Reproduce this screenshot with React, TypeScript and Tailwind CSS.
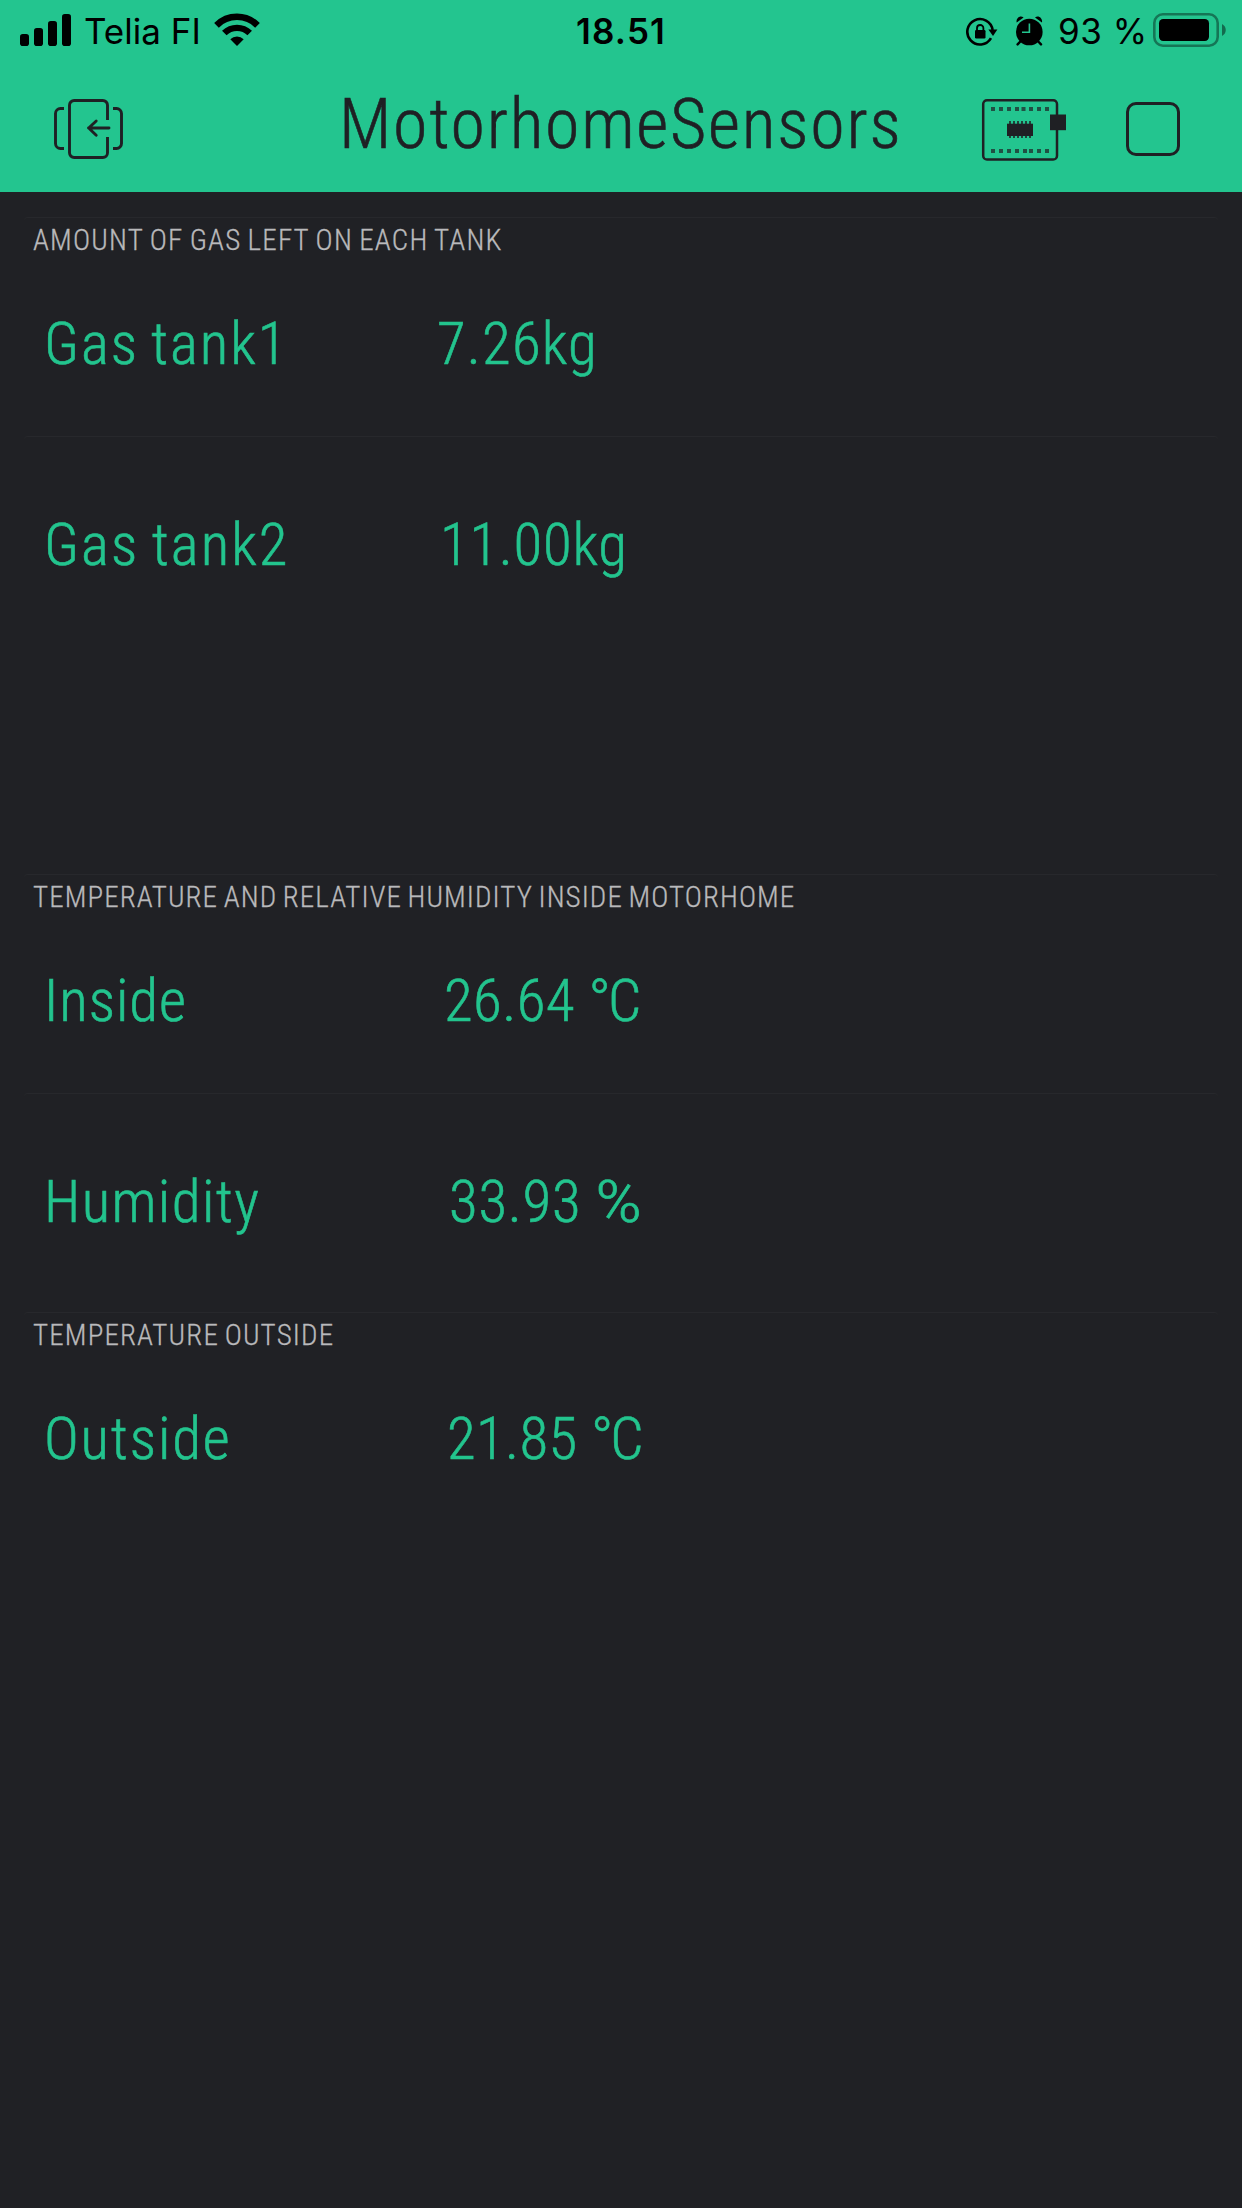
import React from "react";

type Reading = {
  label: string;
  value: string;
  unit: string;
  labelClass: string;
  valueClass: string;
  unitClass?: string;
};

function SignalIcon() {
  return (
    <svg className="ml-5 mt-3.5 h-8 w-[52px]" viewBox="20 14 52 32">
      <rect x="20" y="34" width="9" height="12" rx="2.8" />
      <rect x="34" y="28" width="9" height="18" rx="2.8" />
      <rect x="48" y="21" width="9" height="25" rx="2.8" />
      <rect x="62" y="14" width="9" height="32" rx="2.8" />
    </svg>
  );
}

function WifiIcon() {
  return (
    <svg className="mt-3 h-[34px] w-12" viewBox="213 12 48 34">
      <path d="M216.500 25.300A29 29 0 0 1 257.500 25.300" fill="none" stroke="#000" strokeWidth="6.600" />
      <path d="M224.300 33.100A18 18 0 0 1 249.700 33.100" fill="none" stroke="#000" strokeWidth="6.400" />
      <path d="M230.300 39.300A9.600 9.600 0 0 1 243.700 39.300L237 46Z" />
    </svg>
  );
}

function RotationLockIcon() {
  return (
    <svg className="h-8 w-[33px]" viewBox="965 15 33 32">
      <path d="M992.600 30A12.700 12.700 0 1 0 991 38.200" fill="none" stroke="#000" strokeWidth="2.600" />
      <path d="M988.400 29.600H997.400L993 36Z" />
      <rect x="975" y="30" width="10.500" height="8.500" rx="1.200" />
      <path d="M977 31V28.200a3.200 3.200 0 0 1 6.400 0V31" fill="none" stroke="#000" strokeWidth="1.800" />
    </svg>
  );
}

function AlarmIcon() {
  return (
    <svg className="h-8 w-[30px]" viewBox="1014 15 30 32">
      <circle cx="1029.300" cy="32" r="13.300" />
      <path d="M1016.700 22.600C1015.600 18.600 1020 14.600 1023.600 17.600ZM1041.900 22.600C1043 18.600 1038.600 14.600 1035 17.600Z" />
      <path d="M1020.800 41L1017.600 44.400M1037.800 41L1041 44.400" stroke="#000" strokeWidth="2.400" strokeLinecap="round" />
      <path d="M1029.400 23.400V32.300H1022" fill="none" stroke="#23c58f" strokeWidth="1.600" />
    </svg>
  );
}

function BatteryIcon() {
  return (
    <svg className="h-[34px] w-[75px]" viewBox="1152 13 75 34">
      <rect x="1154.300" y="14.300" width="63.400" height="31.400" rx="8.600" fill="none" stroke="#000" strokeOpacity=".4" strokeWidth="2.600" />
      <rect x="1159" y="19" width="50" height="22" rx="4.200" />
      <path d="M1222 24C1227 26.500 1227 33.500 1222 36Z" fillOpacity=".45" />
    </svg>
  );
}

function ExitIcon() {
  return (
    <svg className="h-[62px] w-[70px]" viewBox="54 98 70 62" fill="none" stroke="#1f2024" strokeWidth="2.900">
      <path d="M107.500 120V105.200a4.700 4.700 0 0 0-4.700-4.700H74.200a4.700 4.700 0 0 0-4.700 4.700V152.800a4.700 4.700 0 0 0 4.700 4.700H102.800a4.700 4.700 0 0 0 4.700-4.700V137" />
      <path d="M109 128H88.500M96.200 121L88.700 128L96.200 135.200" strokeLinecap="round" strokeLinejoin="round" />
      <path d="M64 108.500H60.500a5 5 0 0 0-5 5V143.500a5 5 0 0 0 5 5H64M113 108.500H116.500a5 5 0 0 1 5 5V143.500a5 5 0 0 1-5 5H113" />
    </svg>
  );
}

const topPads = [991, 999, 1007, 1015, 1021.5, 1029, 1037, 1045];
const bottomPads = [991, 999, 1007, 1015, 1023, 1029, 1037, 1045];
const chipPins = [1009, 1013, 1017, 1021, 1025, 1029];

function BoardIcon() {
  return (
    <svg className="h-16 w-[86px]" viewBox="981 98 86 64" fill="#1f2024">
      <rect x="983.200" y="100.200" width="73.800" height="59.300" rx="3.800" fill="none" stroke="#1f2024" strokeWidth="2.500" />
      {topPads.map((x) => (
        <rect key={x} x={x} y="107" width="4" height="4" fillOpacity=".7" />
      ))}
      {bottomPads.map((x) => (
        <rect key={x} x={x} y="149" width="4" height="4" fillOpacity=".7" />
      ))}
      {chipPins.map((x) => (
        <path key={x} d={`M${x} 121h2v3h-2zM${x} 136h2v2h-2z`} fillOpacity=".8" />
      ))}
      <rect x="1007" y="123.700" width="26" height="12.300" />
      <rect x="1050" y="114.500" width="16" height="15.700" />
    </svg>
  );
}

function ReadingRow({ label, value, unit, labelClass, valueClass, unitClass = "" }: Reading) {
  return (
    <div className="flex h-20 whitespace-nowrap pl-5 text-[59px] font-light leading-[80px] text-[#23c48e] [-webkit-text-stroke:0.6px_#23c48e]">
      <span className={`w-[393px] ${labelClass}`}>{label}</span>
      <span className={valueClass}>
        {value}
        <span className={unitClass}>{unit}</span>
      </span>
    </div>
  );
}

function Widget({ caption, captionClass, className, reading }: { caption?: string; captionClass?: string; className: string; reading: Reading }) {
  return (
    <section className={`mx-6 rounded border-t border-[#27282c] ${className}`}>
      {caption ? (
        <h2 className={`mb-12 mt-1.5 h-8 whitespace-nowrap pl-[9px] text-[29px] font-light leading-8 text-[#b9b9bb] [-webkit-text-stroke:0.3px_#b9b9bb] ${captionClass}`}>{caption}</h2>
      ) : (
        <div className="h-[68px]" />
      )}
      <ReadingRow {...reading} />
    </section>
  );
}

export default function App() {
  return (
    <div className="h-[2208px] w-[1242px] overflow-hidden bg-[#202125] font-['Roboto_Condensed',Roboto,sans-serif]">
      <header className="h-48 bg-[#23c58f] text-[#1f2024]">
        <div className="flex h-[62px] items-start font-['Inter',sans-serif] text-[35px] leading-[44px] text-black">
          <SignalIcon />
          <span className="ml-3 mt-[9px] w-[129px] whitespace-nowrap">Telia FI</span>
          <WifiIcon />
          <span className="ml-[315px] mt-[9px] w-[90px] whitespace-nowrap font-semibold tracking-[1.200px]">18.51</span>
          <div className="ml-[299px] mt-[15px]">
            <RotationLockIcon />
          </div>
          <div className="ml-4 mt-[15px]">
            <AlarmIcon />
          </div>
          <span className="ml-[14px] mt-[9px] w-[94px] whitespace-nowrap tracking-[0.500px]">93 %</span>
          <div className="mt-[13px]">
            <BatteryIcon />
          </div>
        </div>
        <div className="flex items-start pl-[54px]">
          <div className="mt-9">
            <ExitIcon />
          </div>
          <h1 className="ml-[215px] mt-[22px] w-[642px] whitespace-nowrap text-[70px] font-light leading-[80px] tracking-[1.750px] [-webkit-text-stroke:0.6px_#1f2024]">MotorhomeSensors</h1>
          <div className="mt-9">
            <BoardIcon />
          </div>
          <div className="ml-[59px] mt-10 size-[54px] rounded-[10px] border-3 border-[#1f2024]" />
        </div>
      </header>
      <main className="pt-[25px]">
        <Widget
          className="h-[219px]"
          caption="AMOUNT OF GAS LEFT ON EACH TANK"
          captionClass="tracking-[1.200px] [word-spacing:-1.500px]"
          reading={{ label: "Gas tank1", value: "7.26", unit: "kg", labelClass: "tracking-[1.900px] [word-spacing:-3px]", valueClass: "tracking-[1.150px]" }}
        />
        <Widget
          className="h-[438px]"
          reading={{ label: "Gas tank2", value: "11.00", unit: "kg", labelClass: "tracking-[2.050px] [word-spacing:-3px]", valueClass: "pl-[3px] tracking-[0.700px]" }}
        />
        <Widget
          className="h-[219px]"
          caption="TEMPERATURE AND RELATIVE HUMIDITY INSIDE MOTORHOME"
          captionClass="tracking-[1.070px] [word-spacing:-2px]"
          reading={{ label: "Inside", value: "26.64 ", unit: "°C", labelClass: "tracking-[0.900px]", valueClass: "pl-[7px] tracking-[0.400px]", unitClass: "tracking-[-3px]" }}
        />
        <Widget
          className="h-[219px]"
          reading={{ label: "Humidity", value: "33.93 ", unit: "%", labelClass: "tracking-[1.400px]", valueClass: "pl-[12px] tracking-[0.700px]", unitClass: "inline-block origin-left scale-x-[1.250]" }}
        />
        <Widget
          className="h-[219px]"
          caption="TEMPERATURE OUTSIDE"
          captionClass="tracking-[1.150px] [word-spacing:-2px]"
          reading={{ label: "Outside", value: "21.85 ", unit: "°C", labelClass: "tracking-[1.800px]", valueClass: "pl-[10px] tracking-[0.300px]", unitClass: "tracking-[-3px]" }}
        />
      </main>
    </div>
  );
}
